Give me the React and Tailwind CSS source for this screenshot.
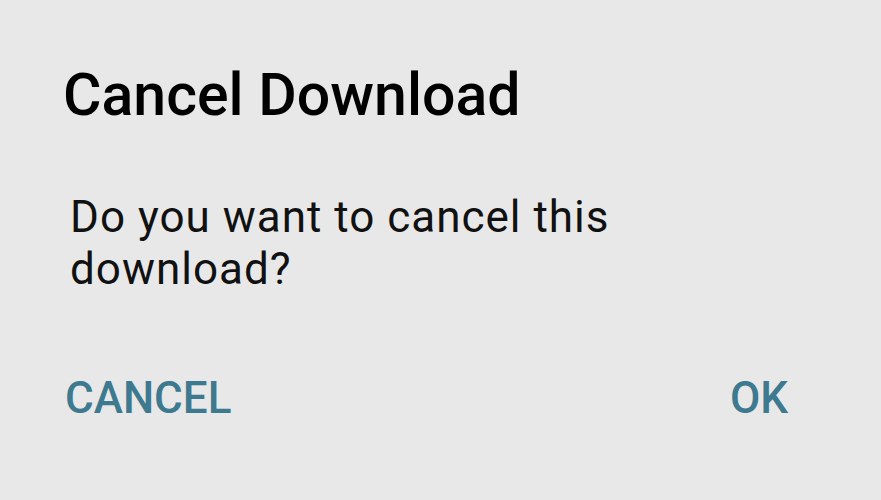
export default function App() {
  return (
    <div className="w-[881px] h-[500px] bg-[#e8e8e8] flex flex-col" style={{ fontFamily: "Roboto, sans-serif" }}>
      <h1 className="ml-[63px] mt-[65px] text-[59px] leading-[59px] font-medium text-black">Cancel Download</h1>
      <p className="ml-[70px] mt-[67px] w-[600px] text-[44px] leading-[52px] tracking-[1px] text-[#111]">Do you want to cancel this download?</p>
      <div className="flex justify-between ml-[65px] mr-[93px] mt-[81px]">
        <span className="text-[44px] leading-[44px] font-medium text-[#3e7a8f]">CANCEL</span>
        <span className="text-[44px] leading-[44px] font-medium text-[#3e7a8f]">OK</span>
      </div>
    </div>
  );
}
